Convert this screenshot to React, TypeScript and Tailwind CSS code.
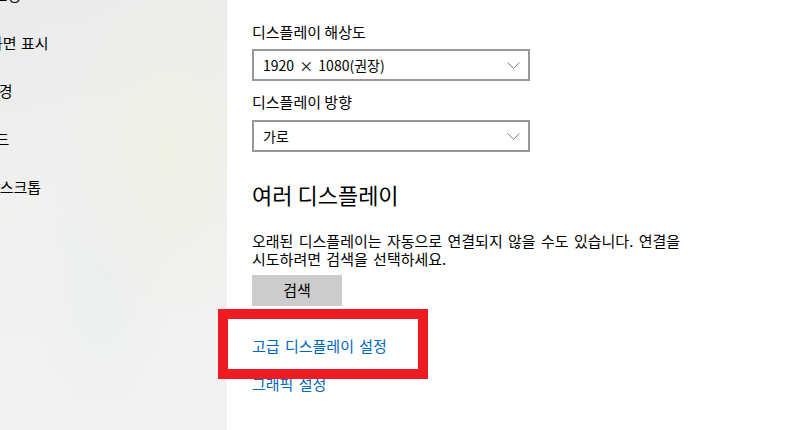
import React from "react";

const font = { fontFamily: '"Noto Sans CJK KR", "Noto Sans", sans-serif' };

function Chevron() {
  return (
    <svg width="13" height="7" viewBox="0 0 13 7" className="block">
      <polyline points="0.5,0.5 6.5,6.3 12.5,0.5" fill="none" stroke="#7a7a7a" strokeWidth="1" />
    </svg>
  );
}

function Dropdown({ value }: { value: string }) {
  return (
    <div className="w-[278px] h-[32px] border-2 border-[#999999] flex items-center justify-between pl-[9px] pr-[8px] bg-white">
      <span className="text-[14px] leading-[20px] text-black [word-spacing:2px]">{value}</span>
      <Chevron />
    </div>
  );
}

export default function App() {
  return (
    <div className="w-[793px] h-[430px] flex overflow-hidden relative bg-white" style={font}>
      <div className="w-[227px] h-full overflow-hidden bg-[radial-gradient(ellipse_at_75%_35%,#eef0e5_0%,rgba(238,240,229,0)_45%),radial-gradient(ellipse_at_45%_65%,#eceeef_0%,rgba(236,238,239,0)_40%),linear-gradient(170deg,#ebebeb_0%,#f0f0ef_45%,#f3f3f3_100%)]">
        <div className="mt-[-29px] flex flex-col text-[15px] text-black [word-spacing:1px]">
          <div className="h-[48px] flex items-center whitespace-nowrap ml-[-48px]">멀티태스킹</div>
          <div className="h-[48px] flex items-center whitespace-nowrap ml-[-11px]">화면 표시</div>
          <div className="h-[48px] flex items-center whitespace-nowrap ml-[-47px]">공유 환경</div>
          <div className="h-[48px] flex items-center whitespace-nowrap ml-[-46px]">클립보드</div>
          <div className="h-[48px] flex items-center whitespace-nowrap ml-[-46px]">원격 데스크톱</div>
        </div>
      </div>
      <div className="flex-1 pl-[25px] flex flex-col text-black">
        <div className="mt-[22px] text-[15px] leading-[20px]">디스플레이 해상도</div>
        <div className="mt-[7px]">
          <Dropdown value="1920 × 1080(권장)" />
        </div>
        <div className="mt-[11px] text-[15px] leading-[20px]">디스플레이 방향</div>
        <div className="mt-[8px]">
          <Dropdown value="가로" />
        </div>
        <div className="mt-[28px] text-[22px] leading-[28px]">여러 디스플레이</div>
        <div className="mt-[24px] text-[15px] leading-[18px] w-[480px] whitespace-nowrap [word-spacing:2px]">
          오래된 디스플레이는 자동으로 연결되지 않을 수도 있습니다. 연결을
          <br />
          시도하려면 검색을 선택하세요.
        </div>
        <div className="mt-[7px]">
          <button className="w-[90px] h-[31px] bg-[#cccccc] text-[15px] text-black flex items-center justify-center">
            검색
          </button>
        </div>
        <div className="mt-[30px] text-[15px] leading-[20px] text-[#0067c0] [word-spacing:2px]">고급 디스플레이 설정</div>
        <div className="mt-[18px] text-[15px] leading-[20px] text-[#0067c0] [word-spacing:2px]">그래픽 설정</div>
      </div>
      <div className="absolute left-[218px] top-[309px] w-[210px] h-[70px] border-[10px] border-[#ed1c24]" />
    </div>
  );
}
